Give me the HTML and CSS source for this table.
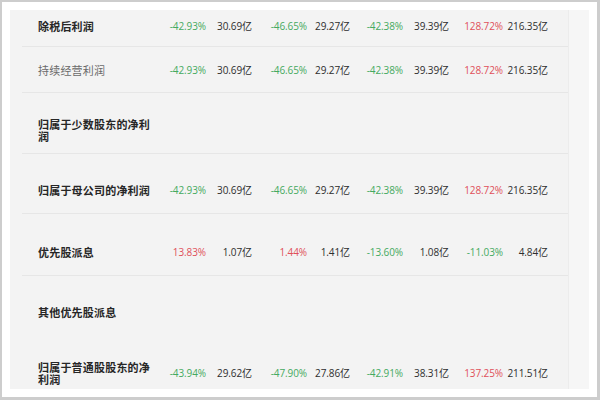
FILE: index.html
```html
<!DOCTYPE html>
<html lang="zh">
<head>
<meta charset="utf-8">
<link rel="stylesheet" href="styles.css">
</head>
<body>
<div class="frame">
  <div class="panel">
    <div class="table">
      <div class="row r1">
        <div class="label">除税后利润</div>
        <div class="v g">-42.93%</div><div class="v">30.69亿</div>
        <div class="v g">-46.65%</div><div class="v">29.27亿</div>
        <div class="v g">-42.38%</div><div class="v">39.39亿</div>
        <div class="v r">128.72%</div><div class="v">216.35亿</div>
      </div>
      <div class="row r2">
        <div class="label light">持续经营利润</div>
        <div class="v g">-42.93%</div><div class="v">30.69亿</div>
        <div class="v g">-46.65%</div><div class="v">29.27亿</div>
        <div class="v g">-42.38%</div><div class="v">39.39亿</div>
        <div class="v r">128.72%</div><div class="v">216.35亿</div>
      </div>
      <div class="row r3">
        <div class="label">归属于少数股东的净利润</div>
      </div>
      <div class="row r4">
        <div class="label">归属于母公司的净利润</div>
        <div class="v g">-42.93%</div><div class="v">30.69亿</div>
        <div class="v g">-46.65%</div><div class="v">29.27亿</div>
        <div class="v g">-42.38%</div><div class="v">39.39亿</div>
        <div class="v r">128.72%</div><div class="v">216.35亿</div>
      </div>
      <div class="row r5">
        <div class="label">优先股派息</div>
        <div class="v r">13.83%</div><div class="v">1.07亿</div>
        <div class="v r">1.44%</div><div class="v">1.41亿</div>
        <div class="v g">-13.60%</div><div class="v">1.08亿</div>
        <div class="v g">-11.03%</div><div class="v">4.84亿</div>
      </div>
      <div class="row r6 noline">
        <div class="label">其他优先股派息</div>
      </div>
      <div class="row r7 noline">
        <div class="label">归属于普通股股东的净利润</div>
        <div class="v g">-43.94%</div><div class="v">29.62亿</div>
        <div class="v g">-47.90%</div><div class="v">27.86亿</div>
        <div class="v g">-42.91%</div><div class="v">38.31亿</div>
        <div class="v r">137.25%</div><div class="v">211.51亿</div>
      </div>
    </div>
    <div class="side"></div>
  </div>
</div>
</body>
</html>
```

FILE: styles.css
```css
html, body {
  margin: 0;
  padding: 0;
  background: #ffffff;
}
.frame {
  box-sizing: border-box;
  width: 600px;
  height: 400px;
  border: 3px solid #cdcdcd;
  border-left-width: 2px;
  border-top-width: 2px;
  background: #ffffff;
  padding: 8px 8px 8px 8px;
  overflow: hidden;
}
.panel {
  display: flex;
  height: 379px;
  background: #f3f3f3;
  overflow: hidden;
}
.table {
  width: 547px;
  padding-left: 12px;
}
.side {
  width: 20px;
  background: #f6f6f6;
  border-left: 1px solid #ececec;
}
.row {
  display: grid;
  grid-template-columns: 132px 52px 46px 55px 43px 53px 46px 54px 45px;
  align-items: center;
  box-sizing: border-box;
  border-bottom: 1px solid #e6e6e6;
}
.row.noline {
  border-bottom: none;
}
.r1 { height: 37px; padding-bottom: 5px; }
.r2 { height: 46px; padding-top: 0; }
.r3 { height: 61px; padding-top: 14px; }
.r4 { height: 60px; padding-top: 13px; }
.r5 { height: 62px; padding-top: 15px; }
.r6 { height: 61px; padding-top: 10px; }
.r7 { height: 52px; padding-top: 20px; }
.label {
  padding-left: 16px;
  width: 114px;
  font-family: "Noto Sans CJK SC", "Noto Sans", sans-serif;
  font-size: 11px;
  letter-spacing: 0.2px;
  font-weight: 700;
  line-height: 12px;
  color: #262626;
}
.label.light {
  font-weight: 400;
  color: #6a6a6a;
}
.v {
  text-align: right;
  font-family: "Open Sans", "Noto Sans CJK SC", sans-serif;
  font-size: 10px;
  line-height: 12px;
  color: #2e2e2e;
  letter-spacing: -0.1px;
  white-space: nowrap;
}
.v.g { color: #45aa60; }
.v.r { color: #e0505a; }
```
